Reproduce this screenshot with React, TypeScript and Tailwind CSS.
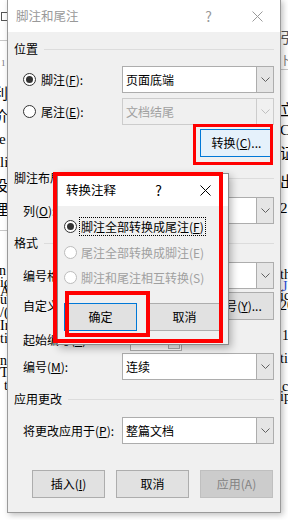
import React from 'react';

const ui = { fontFamily: '"Noto Sans CJK SC", "Noto Sans", sans-serif' };
const doc = { fontFamily: '"Liberation Serif", "Noto Sans CJK SC", serif' };

const Chevron = ({ color = '#606060' }: { color?: string }) => (
  <svg width="9" height="5" viewBox="0 0 9 5">
    <polyline points="0.5,0.5 4.5,4.5 8.5,0.5" fill="none" stroke={color} strokeWidth="1" />
  </svg>
);

const CloseX = ({ color }: { color: string }) => (
  <svg width="11" height="11" viewBox="0 0 11 11">
    <path d="M0.5 0.5 L10.5 10.5 M10.5 0.5 L0.5 10.5" stroke={color} strokeWidth="1" />
  </svg>
);

const Key = ({ k }: { k: string }) => <span className="underline underline-offset-[1px]">{k}</span>;

const Combo = ({ text, disabled = false }: { text: string; disabled?: boolean }) => (
  <div
    className={`flex h-[27px] w-[152px] border ${disabled ? 'border-[#cccccc] bg-[#f0f0f0] text-[#a0a0a0]' : 'border-[#adadad] bg-white text-black'}`}
  >
    <div className="flex flex-1 items-center pl-[3px]">{text}</div>
    <div
      className={`flex w-[17px] items-center justify-center border-l ${disabled ? 'border-[#cccccc] bg-[#f0f0f0]' : 'border-[#adadad] bg-[#e5e5e5]'}`}
    >
      <Chevron color={disabled ? '#bfbfbf' : '#606060'} />
    </div>
  </div>
);

const Radio = ({ checked = false, disabled = false }: { checked?: boolean; disabled?: boolean }) => (
  <div
    className={`flex h-[13px] w-[13px] items-center justify-center rounded-full border bg-white ${disabled ? 'border-[#bcbcbc]' : 'border-[#333333]'}`}
  >
    {checked && <div className="h-[7px] w-[7px] rounded-full bg-[#333333]" />}
  </div>
);

const Group = ({ title, className = '' }: { title: string; className?: string }) => (
  <div className={`flex h-[18px] items-center gap-[6px] ${className}`}>
    <span>{title}</span>
    <div className="h-px flex-1 bg-[#dcdcdc]" />
  </div>
);

const Button = ({ children, variant = 'normal' }: { children: React.ReactNode; variant?: 'normal' | 'hover' | 'default' | 'disabled' }) => {
  const styles = {
    normal: 'border-[#adadad] bg-[#e1e1e1] text-black',
    hover: 'border-[#0078d7] bg-[#e5f1fb] text-black',
    default: 'border-[#0078d7] bg-[#e1e1e1] text-black',
    disabled: 'border-[#bfbfbf] bg-[#cccccc] text-[#838383]',
  }[variant];
  return (
    <div className={`flex h-[28px] w-[73px] items-center justify-center border ${styles}`}>{children}</div>
  );
};

const LeftDoc = () => (
  <div className="flex w-[8px] flex-col overflow-hidden text-[15px] leading-none text-black" style={doc}>
    <div className="mt-[12px] ml-[1px] h-[9px] w-[8px] border border-[#555]" />
    <div className="mt-[19px] h-px w-full bg-[#c8c8c8]" />
    <div className="mt-[18px] pl-[1px] text-[9px] text-[#777]">1</div>
    <div className="mt-[19px] h-[22px] -ml-[7px]">利</div>
    <div className="h-[23px] -ml-[7px]">价</div>
    <div className="h-[23px] -ml-[1px]">e</div>
    <div className="h-[24px]">li</div>
    <div className="h-[24px] -ml-[7px]">设</div>
    <div className="h-[24px] -ml-[7px]">理</div>
    <div className="mt-[3px] h-px w-full bg-[#c8c8c8]" />
    <div className="mt-[33px] h-[12px] -ml-[1px] text-[14px]">n</div>
    <div className="h-[9px] text-[14px]">ic</div>
    <div className="h-[8px] text-[14px]">A,</div>
    <div className="h-[13px] text-[14px]">u</div>
    <div className="h-[13px] text-[14px]">/(</div>
    <div className="h-[13px] text-[14px]">Ir</div>
    <div className="h-[22px] text-[14px]">ti</div>
    <div className="h-[12px] text-[14px]">n</div>
    <div className="h-[13px] text-[14px]">T</div>
    <div className="h-[13px] pl-[4px] text-[14px]">t</div>
  </div>
);

const RightDoc = () => (
  <div className="flex w-[8px] flex-col overflow-hidden text-[15px] leading-none text-black" style={doc}>
    <div className="mt-[31px] h-[16px] text-[#555]">引</div>
    <div className="mt-[8px] h-[10px] text-[#777] text-[12px]">卜</div>
    <div className="mt-[4px] h-px w-full bg-[#c8c8c8]" />
    <div className="mt-[33px] h-[20px]">立</div>
    <div className="h-[24px]">C</div>
    <div className="h-[28px]">证</div>
    <div className="h-[26px]">出</div>
    <div className="h-[26px]">2</div>
    <div className="mt-[41px] h-[12px] text-[14px]">th</div>
    <div className="h-[9px] pl-[2px] text-[14px] text-[#2a4fd6]">J</div>
    <div className="h-[10px] text-[14px]">ic</div>
    <div className="h-[30px] text-[14px]">20</div>
    <div className="h-[23px] pl-[2px] text-[14px]">1</div>
    <div className="h-[28px] text-[14px]">ti</div>
    <div className="h-[10px] pl-[2px] text-[14px]">c</div>
    <div className="h-[12px] text-[14px]">ip</div>
  </div>
);

export default function App() {
  return (
    <div className="relative flex h-[520px] w-[288px] justify-between overflow-hidden bg-white text-[12px] leading-none" style={ui}>
      <LeftDoc />
      <RightDoc />

      {/* main dialog */}
      <div className="absolute left-[7px] top-[-1px] flex h-[514px] w-[274px] flex-col border border-[#9a9a9a] bg-[#f0f0f0] shadow-[2px_2px_6px_rgba(0,0,0,0.25)]">
        <div className="flex h-[32px] shrink-0 items-center bg-white pl-[8px] text-[#999999]">
          <span className="flex-1 text-[12.5px]">脚注和尾注</span>
          <span className="mr-[40px] text-[14px]">?</span>
          <span className="mr-[17px]"><CloseX color="#9a9a9a" /></span>
        </div>

        <div className="flex flex-col pl-[6px] pr-[6px]">
          <Group title="位置" className="mt-[8px]" />
          <div className="mt-[8px] flex h-[27px] items-center">
            <div className="ml-[9px] mr-[5px]"><Radio checked /></div>
            <span className="flex-1">脚注(<Key k="F" />):</span>
            <Combo text="页面底端" />
          </div>
          <div className="mt-[5px] flex h-[27px] items-center">
            <div className="ml-[9px] mr-[5px]"><Radio /></div>
            <span className="flex-1">尾注(<Key k="E" />):</span>
            <Combo text="文档结尾" disabled />
          </div>
          <div className="mt-[4px] flex justify-end pr-[1px]">
            <div className="h-[29px]">
              <Button variant="hover">转换(<Key k="C" />)...</Button>
            </div>
          </div>

          <Group title="脚注布局" className="mt-[11px]" />
          <div className="mt-[10px] flex h-[27px] items-center">
            <span className="ml-[9px] flex-1">列(<Key k="O" />):</span>
            <Combo text="" />
          </div>

          <Group title="格式" className="mt-[10px]" />
          <div className="mt-[10px] flex h-[27px] items-center">
            <span className="ml-[9px] flex-1">编号格式(<Key k="N" />):</span>
            <Combo text="1, 2, 3, ..." />
          </div>
          <div className="mt-[3px] flex h-[28px] items-center">
            <span className="ml-[9px] flex-1">自定义标记(<Key k="U" />):</span>
            <div className="mr-[4px] h-[22px] w-[72px] border border-[#adadad] bg-white" />
            <Button>符号(<Key k="Y" />)...</Button>
          </div>
          <div className="mt-[8px] flex h-[23px] items-center">
            <span className="ml-[9px] w-[107px]">起始编号(<Key k="S" />):</span>
            <div className="flex h-[23px] w-[52px] items-center border border-[#adadad] bg-white pl-[3px]">
              <span className="flex-1">1</span>
              <div className="mr-[1px] mb-[1px] flex h-[13px] w-[12px] items-center justify-center self-end border border-[#adadad] bg-[#f0f0f0]">
                <svg width="7" height="4" viewBox="0 0 7 4"><polygon points="0,0 7,0 3.5,4" fill="#000" /></svg>
              </div>
            </div>
          </div>
          <div className="mt-[2px] flex h-[27px] items-center">
            <span className="ml-[9px] flex-1">编号(<Key k="M" />):</span>
            <Combo text="连续" />
          </div>

          <Group title="应用更改" className="mt-[10px]" />
          <div className="mt-[9px] flex h-[27px] items-center">
            <span className="ml-[9px] flex-1">将更改应用于(<Key k="P" />):</span>
            <Combo text="整篇文档" />
          </div>

          <div className="mt-[26px] flex justify-end gap-[11px] pr-[1px]">
            <Button>插入(<Key k="I" />)</Button>
            <Button>取消</Button>
            <Button variant="disabled">应用(A)</Button>
          </div>
        </div>
      </div>

      {/* convert dialog */}
      <div className="absolute left-[57px] top-[173px] flex h-[172px] w-[172px] flex-col border border-[#8a8a8a] bg-[#f0f0f0] shadow-[2px_3px_8px_rgba(0,0,0,0.3)]">
        <div className="flex h-[32px] shrink-0 items-center bg-white pl-[8px] text-black">
          <span className="flex-1 text-[12.5px]">转换注释</span>
          <span className="mr-[38px] text-[14px]">?</span>
          <span className="mr-[17px]"><CloseX color="#000" /></span>
        </div>
        <div className="flex flex-col pl-[6px]">
          <div className="mt-[11px] flex h-[19px] items-center">
            <Radio checked />
            <span className="ml-[2px] flex h-[19px] items-center border border-dotted border-black px-[1px]">脚注全部转换成尾注(<Key k="F" />)</span>
          </div>
          <div className="mt-[7px] flex h-[19px] items-center text-[#a0a0a0]">
            <Radio disabled />
            <span className="ml-[4px]">尾注全部转换成脚注(E)</span>
          </div>
          <div className="mt-[6px] flex h-[19px] items-center text-[#a0a0a0]">
            <Radio disabled />
            <span className="ml-[4px]">脚注和尾注相互转换(S)</span>
          </div>
          <div className="mt-[16px] flex gap-[11px]">
            <Button variant="default">确定</Button>
            <Button>取消</Button>
          </div>
        </div>
      </div>

      {/* red annotation boxes */}
      <div className="pointer-events-none absolute left-[193px] top-[124px] h-[41px] w-[80px] border-[3px] border-[#ff0000]" />
      <div className="pointer-events-none absolute left-[53px] top-[172px] h-[171px] w-[170px] border-[4px] border-[#ff0000]" />
      <div className="pointer-events-none absolute left-[65px] top-[291px] h-[46px] w-[85px] border-[4px] border-[#ff0000]" />
    </div>
  );
}
